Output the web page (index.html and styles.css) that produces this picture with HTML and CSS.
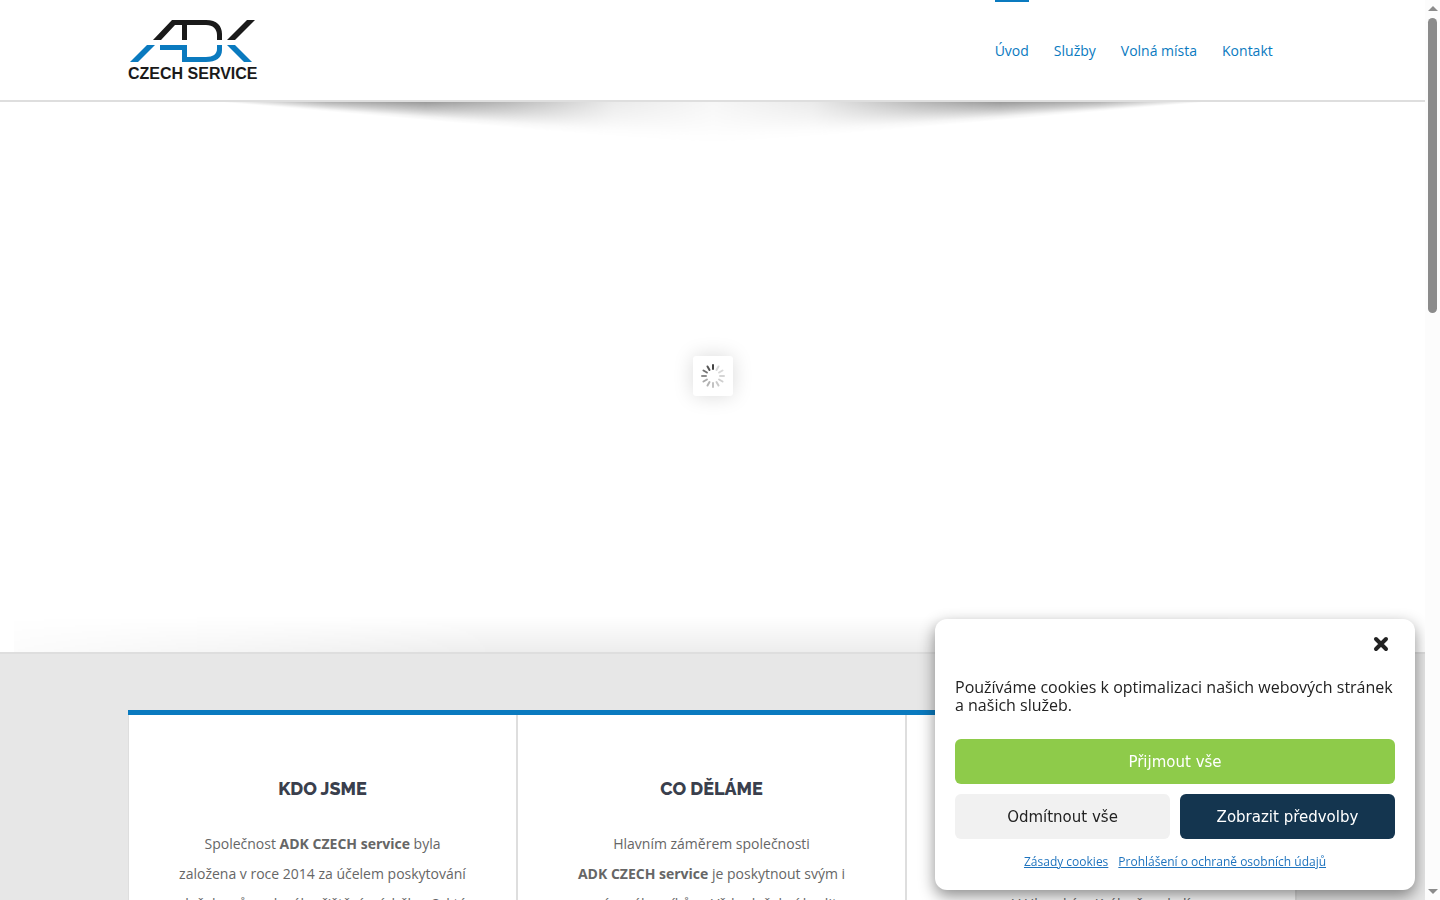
FILE: index.html
```html
<!DOCTYPE html>
<html lang="cs">

<head>
    <meta charset="UTF-8">
    <meta name="viewport" content="width=device-width, initial-scale=1.0">
    <title>ADK CZECH service</title>
    <link rel="stylesheet" href="styles.css">
</head>

<body>
    <div class="page">
        <header class="header">
            <div class="container header-inner">
                <a href="#" class="logo" aria-label="ADK Czech Service">
                    <svg width="132" height="64" viewBox="0 0 132 64">
                        <path fill="#1a1a1a" d="M25 20 44 0H78C89 0 94 6 94 14V20H89V15C89 9 85 5 78 5H59V20H54V5H47L33 20ZM99 20 119 0H127L107 20Z" />
                        <path fill="#0a7abf" d="M2 42 19 25H27L10 42ZM32 25H59V37H78C85 37 89 34 89 29V25H94V30C94 38 88 42 78 42H54V30H32ZM99 25H107L124 42H116Z" />
                        <text x="0" y="59" class="logo-text">CZECH SERVICE</text>
                    </svg>
                </a>
                <nav class="nav">
                    <a href="#" class="active">Úvod</a>
                    <a href="#">Služby</a>
                    <a href="#">Volná místa</a>
                    <a href="#">Kontakt</a>
                </nav>
            </div>
        </header>

        <section class="slider">
            <div class="shadow-top">
                <span></span>
                <span class="flip"></span>
            </div>
            <div class="loader">
                <svg width="24" height="24" viewBox="-12 -12 24 24" stroke="#444" stroke-width="2" stroke-linecap="round">
                    <path d="M0-7V-11" />
                    <path d="M0-7V-11" transform="rotate(30)" opacity=".2" />
                    <path d="M0-7V-11" transform="rotate(60)" opacity=".2" />
                    <path d="M0-7V-11" transform="rotate(90)" opacity=".22" />
                    <path d="M0-7V-11" transform="rotate(120)" opacity=".25" />
                    <path d="M0-7V-11" transform="rotate(150)" opacity=".28" />
                    <path d="M0-7V-11" transform="rotate(180)" opacity=".32" />
                    <path d="M0-7V-11" transform="rotate(210)" opacity=".4" />
                    <path d="M0-7V-11" transform="rotate(240)" opacity=".45" />
                    <path d="M0-7V-11" transform="rotate(270)" opacity=".6" />
                    <path d="M0-7V-11" transform="rotate(300)" opacity=".75" />
                    <path d="M0-7V-11" transform="rotate(330)" opacity=".9" />
                </svg>
            </div>
            <div class="shadow-bottom"></div>
        </section>

        <main class="content">
            <div class="container boxes">
                <div class="box">
                    <h2>Kdo jsme</h2>
                    <p>Společnost <strong>ADK CZECH service</strong> byla<br>založena v roce 2014 za účelem poskytování<br>služeb průmyslového čištění a údržby. Od té</p>
                </div>
                <div class="box">
                    <h2>Co děláme</h2>
                    <p>Hlavním záměrem společnosti<br><strong>ADK CZECH service</strong> je poskytnout svým i<br>novým zákazníkům. Vždy služební kvality</p>
                </div>
                <div class="box">
                    <h2>Kde jsme</h2>
                    <p>Působíme v celé<br>České republice<br>V Uherském Králově a okolí</p>
                </div>
            </div>
        </main>
    </div>

    <div class="cookie" role="dialog" aria-label="Cookies">
        <button class="close" aria-label="Zavřít">
            <svg width="16" height="16" viewBox="0 0 16 16" stroke="#222" stroke-width="4" stroke-linecap="round">
                <path d="M3 3 13 13M13 3 3 13" />
            </svg>
        </button>
        <p>Používáme cookies k optimalizaci našich webových stránek a našich služeb.</p>
        <div class="buttons">
            <button class="btn accept">Přijmout vše</button>
            <button class="btn deny">Odmítnout vše</button>
            <button class="btn prefs">Zobrazit předvolby</button>
        </div>
        <div class="links">
            <a href="#">Zásady cookies</a>
            <a href="#">Prohlášení o ochraně osobních údajů</a>
        </div>
    </div>

    <div class="scrollbar" aria-hidden="true">
        <i class="arrow up"></i>
        <i class="thumb"></i>
        <i class="arrow down"></i>
    </div>
</body>

</html>
```
FILE: styles.css
```css
* {
    box-sizing: border-box;
}

body {
    margin: 0;
    height: 100vh;
    overflow: hidden;
    font-family: "Open Sans", "Noto Sans", sans-serif;
    font-size: 14px;
    color: #666;
    background: #fff;
}

.page {
    margin-right: 15px;
    height: 100%;
    overflow: hidden;
}

.container {
    width: 82%;
    margin: 0 auto;
}

.header {
    border-bottom: 2px solid #dedede;
}

.header-inner {
    display: flex;
    justify-content: space-between;
    height: 100px;
}

.logo {
    padding-top: 20px;
}

.logo svg {
    display: block;
    overflow: visible;
}

.logo-text {
    font: bold 16px "Liberation Sans", Arial, sans-serif;
    fill: #1a1a1a;
}

.nav {
    display: flex;
    gap: 25px;
    padding-right: 24px;
}

.nav a {
    border-top: 2px solid transparent;
    line-height: 98px;
    color: #0a7abf;
    text-decoration: none;
}

.nav a.active {
    border-color: #0a7abf;
}

.slider {
    position: relative;
    display: flex;
    align-items: center;
    justify-content: center;
    height: 550px;
    padding-bottom: 2px;
}

.shadow-top {
    position: absolute;
    top: 0;
    left: 0;
    right: 0;
    display: flex;
    justify-content: center;
}

.shadow-top span {
    width: 495px;
    height: 44px;
    background: conic-gradient(from 90deg at 0 0, rgba(0, 0, 0, 0.4) 0deg, rgba(0, 0, 0, 0.24) 2deg, rgba(0, 0, 0, 0.05) 4deg, transparent 5deg);
    mask-image: linear-gradient(90deg, transparent, rgba(0, 0, 0, 0.75) 22%, #000 42%, rgba(0, 0, 0, 0.7) 58%, rgba(0, 0, 0, 0.2) 80%, rgba(0, 0, 0, 0.08));
}

.shadow-top .flip {
    transform: scaleX(-1);
}

.shadow-bottom {
    position: absolute;
    left: 14px;
    right: 14px;
    bottom: 0;
    height: 36px;
    background: linear-gradient(transparent, rgba(0, 0, 0, 0.07));
    mask-image: linear-gradient(90deg, rgba(0, 0, 0, 0.2), #000 35%, #000 65%, rgba(0, 0, 0, 0.2));
}

.loader {
    display: flex;
    align-items: center;
    justify-content: center;
    width: 40px;
    height: 40px;
    border-radius: 3px;
    background: #fff;
    box-shadow: 0 0 20px rgba(0, 0, 0, 0.15);
}

.content {
    padding: 56px 0;
    border-top: 2px solid #dedede;
    background: #e7e7e7;
}

.boxes {
    display: grid;
    grid-template-columns: repeat(3, 1fr);
    border-top: 5px solid #0a7abf;
    background: #fff;
}

.box {
    padding: 60px 40px;
    border-right: 2px solid #dedede;
    text-align: center;
}

.box:first-child {
    border-left: 1px solid #dedede;
}

.box h2 {
    margin: 0 0 26px;
    font: 800 18px/28px Raleway, "Open Sans", sans-serif;
    color: #3a3f4d;
    text-transform: uppercase;
}

.box p {
    margin: 0;
    line-height: 30px;
    white-space: nowrap;
}

.cookie {
    position: fixed;
    right: 25px;
    bottom: 10px;
    display: flex;
    flex-direction: column;
    width: 480px;
    padding: 14px 20px 20px;
    border-radius: 12px;
    background: #fff;
    color: #222;
    box-shadow: 0 6px 16px rgba(0, 0, 0, 0.45);
}

.cookie p {
    margin: 25px 0;
    font-size: 16px;
    line-height: 18px;
}

.close {
    display: flex;
    align-self: flex-end;
    margin-right: 6px;
    padding: 3px 0 1px;
    border: 0;
    background: none;
}

.buttons {
    display: grid;
    grid-template-columns: 1fr 1fr;
    gap: 10px;
}

.btn {
    height: 45px;
    border: 0;
    border-radius: 6px;
    font: 15px "DejaVu Sans", sans-serif;
}

.accept {
    grid-column: 1 / 3;
    background: #8ecb4a;
    color: #fff;
}

.deny {
    background: #f1f1f1;
    color: #222;
}

.prefs {
    background: #14354f;
    color: #fff;
}

.links {
    display: flex;
    justify-content: center;
    gap: 10px;
    margin-top: 14px;
    font-size: 12px;
    line-height: 17px;
}

.links a {
    color: #1e73be;
}

.scrollbar {
    position: fixed;
    top: 0;
    right: 0;
    bottom: 0;
    display: flex;
    flex-direction: column;
    align-items: center;
    width: 15px;
    padding: 6px 0;
    background: #fcfcfc;
}

.arrow {
    border: 5px solid transparent;
}

.up {
    border-top: 0;
    border-bottom-color: #8b8b8b;
}

.down {
    margin-top: auto;
    border-bottom: 0;
    border-top-color: #8b8b8b;
}

.thumb {
    width: 9px;
    height: 295px;
    margin-top: 7px;
    border-radius: 5px;
    background: #8b8b8b;
}
```
